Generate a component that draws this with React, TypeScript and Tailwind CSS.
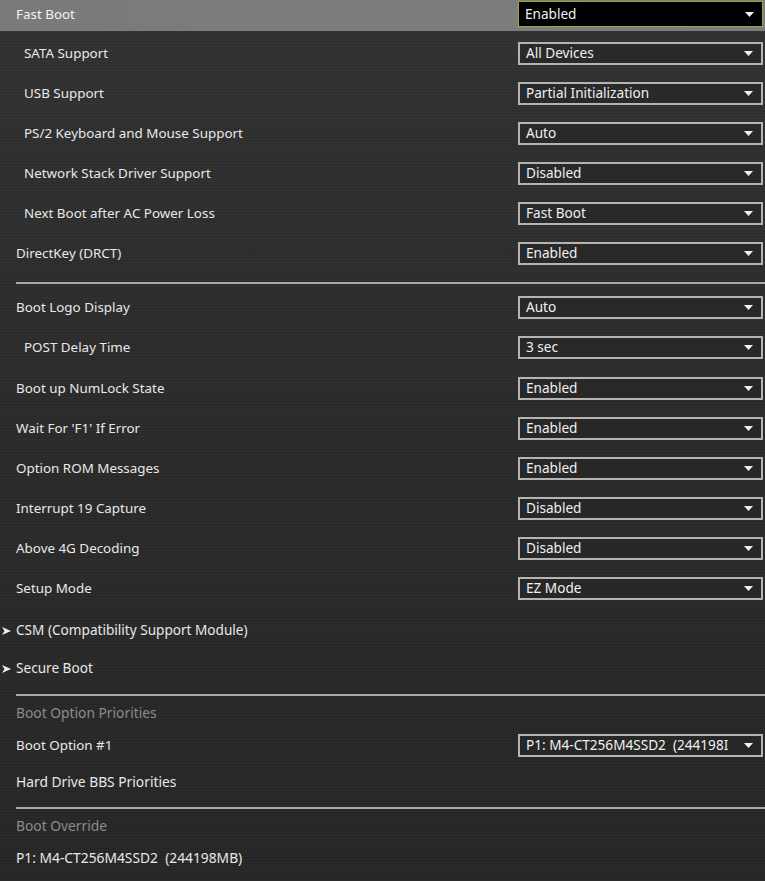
const font = { fontFamily: '"Noto Sans", "Open Sans", sans-serif' }

type Row =
  | { kind: 'select'; label: string; value: string; indent?: boolean; h: number }
  | { kind: 'link'; label: string; h: number }
  | { kind: 'text'; label: string; h: number; muted?: boolean }
  | { kind: 'divider'; cls: string }

const rows: Row[] = [
  { kind: 'select', label: 'SATA Support', value: 'All Devices', indent: true, h: 40 },
  { kind: 'select', label: 'USB Support', value: 'Partial Initialization', indent: true, h: 40 },
  { kind: 'select', label: 'PS/2 Keyboard and Mouse Support', value: 'Auto', indent: true, h: 40 },
  { kind: 'select', label: 'Network Stack Driver Support', value: 'Disabled', indent: true, h: 40 },
  { kind: 'select', label: 'Next Boot after AC Power Loss', value: 'Fast Boot', indent: true, h: 40 },
  { kind: 'select', label: 'DirectKey (DRCT)', value: 'Enabled', h: 40 },
  { kind: 'divider', cls: 'mt-[9px] mb-[3px]' },
  { kind: 'select', label: 'Boot Logo Display', value: 'Auto', h: 40 },
  { kind: 'select', label: 'POST Delay Time', value: '3 sec', indent: true, h: 41 },
  { kind: 'select', label: 'Boot up NumLock State', value: 'Enabled', h: 40 },
  { kind: 'select', label: "Wait For 'F1' If Error", value: 'Enabled', h: 40 },
  { kind: 'select', label: 'Option ROM Messages', value: 'Enabled', h: 40 },
  { kind: 'select', label: 'Interrupt 19 Capture', value: 'Disabled', h: 40 },
  { kind: 'select', label: 'Above 4G Decoding', value: 'Disabled', h: 40 },
  { kind: 'select', label: 'Setup Mode', value: 'EZ Mode', h: 40 },
  { kind: 'link', label: 'CSM (Compatibility Support Module)', h: 45 },
  { kind: 'link', label: 'Secure Boot', h: 31 },
  { kind: 'divider', cls: 'mt-[10px]' },
  { kind: 'text', label: 'Boot Option Priorities', muted: true, h: 34 },
  { kind: 'select', label: 'Boot Option #1', value: 'P1: M4-CT256M4SSD2  (244198I', h: 30 },
  { kind: 'text', label: 'Hard Drive BBS Priorities', h: 44 },
  { kind: 'divider', cls: 'mt-[3px]' },
  { kind: 'text', label: 'Boot Override', muted: true, h: 34 },
  { kind: 'text', label: 'P1: M4-CT256M4SSD2  (244198MB)', h: 30 },
]

function Caret() {
  return (
    <svg width="9" height="5" viewBox="0 0 9 5" className="shrink-0">
      <path d="M0 0 L9 0 L4.5 5 Z" fill="#f2f2f2" />
    </svg>
  )
}

function Select({ value, active }: { value: string; active?: boolean }) {
  return (
    <div
      className={`w-[245px] shrink-0 flex items-center pl-[6px] pr-[8px] text-[13.6px] text-[#f0f0f0] whitespace-pre overflow-hidden ${
        active
          ? 'bg-black border border-[#a3a33a] h-[26px]'
          : 'h-[23px] bg-[#262626]/70 border-2 border-[#b4b4b4]'
      }`}
    >
      <span className="flex-1 overflow-hidden">{value}</span>
      <Caret />
    </div>
  )
}

export default function App() {
  return (
    <div
      className="w-[765px] h-[881px] overflow-hidden text-[#e8e8e8]"
      style={{
        ...font,
        backgroundColor: '#2b2b2b',
        backgroundImage:
          'repeating-linear-gradient(0deg, rgba(255,255,255,0.02) 0px, rgba(255,255,255,0.02) 1px, rgba(0,0,0,0.035) 2px, rgba(0,0,0,0) 3px), linear-gradient(180deg, #313131 0%, #2a2a2a 50%, #262626 100%)',
      }}
    >
      {/* active row */}
      <div className="h-[31px] flex items-start justify-between pl-4 pr-[2px] pt-[1px] bg-gradient-to-r from-[#7a7a7a] to-[#7e7e7e]">
        <span className="text-[13.4px] text-[#f2f2f2] leading-[24px] mt-[1px]">Fast Boot</span>
        <Select value="Enabled" active />
      </div>
      <div className="h-[2px]" />

      {rows.map((r, i) => {
        if (r.kind === 'divider')
          return <div key={i} className={`ml-4 h-[2px] bg-[#a9a9a9] ${r.cls}`} />
        if (r.kind === 'select')
          return (
            <div
              key={i}
              className={`flex items-center justify-between pr-[2px] ${r.indent ? 'pl-6' : 'pl-4'}`}
              style={{ height: r.h }}
            >
              <span className="text-[13.4px]">{r.label}</span>
              <Select value={r.value} />
            </div>
          )
        if (r.kind === 'link')
          return (
            <div key={i} className="flex items-center pl-[2px]" style={{ height: r.h }}>
              <svg width="9" height="8" viewBox="0 0 9 8" className="mr-[5px]">
                <path d="M0 0 L9 4 L0 8 L2.5 4 Z" fill="#eeeeee" />
              </svg>
              <span className="text-[13.6px]">{r.label}</span>
            </div>
          )
        return (
          <div key={i} className="flex items-center pl-4 whitespace-pre" style={{ height: r.h }}>
            <span className={`text-[13.8px] ${r.muted ? 'text-[#8c8c8c]' : ''}`}>{r.label}</span>
          </div>
        )
      })}
    </div>
  )
}
